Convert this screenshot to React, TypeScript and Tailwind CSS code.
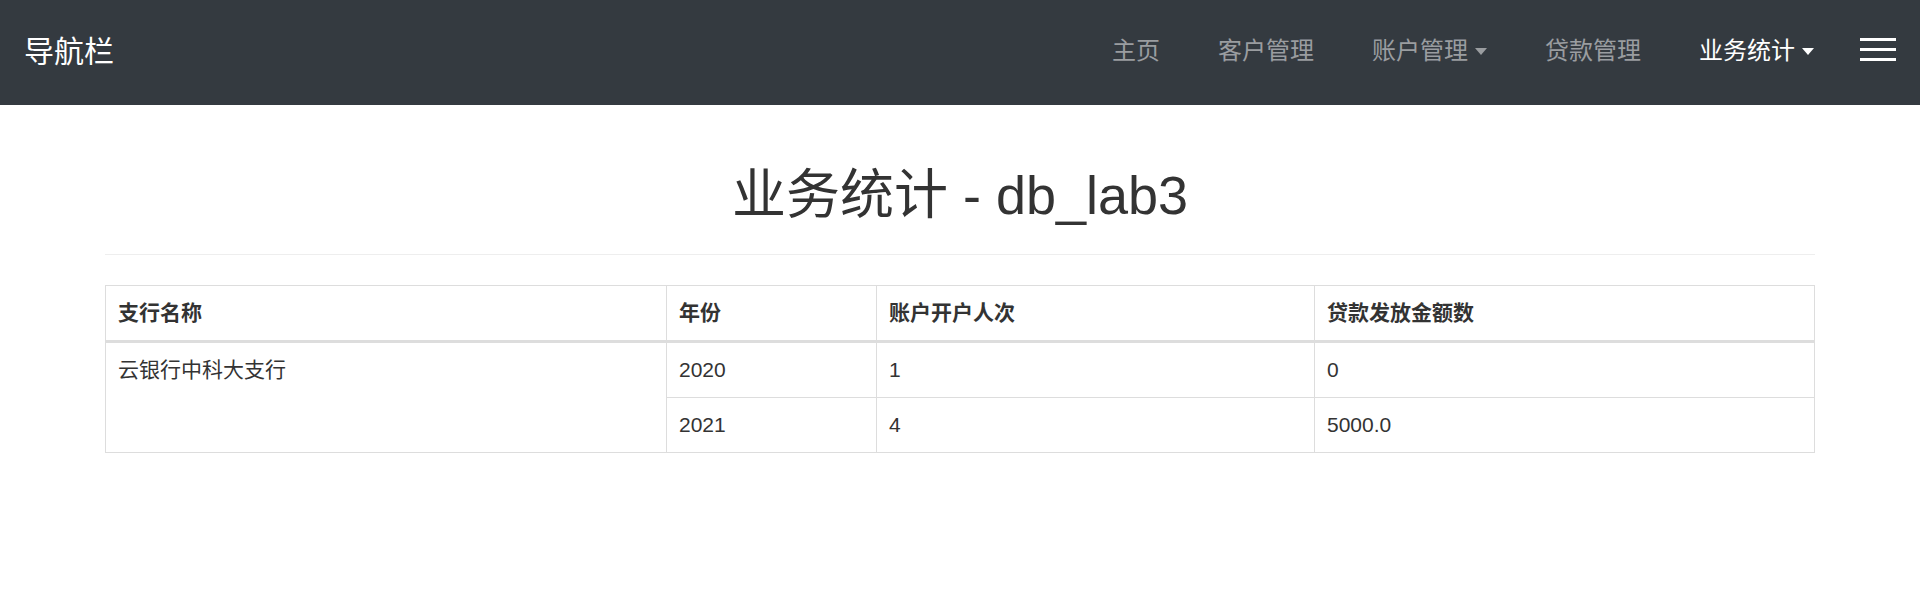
const navItems = [
  { label: "主页", caret: false, active: false },
  { label: "客户管理", caret: false, active: false },
  { label: "账户管理", caret: true, active: false },
  { label: "贷款管理", caret: false, active: false },
  { label: "业务统计", caret: true, active: true },
];

const rows = [
  { year: "2020", opens: "1", amount: "0" },
  { year: "2021", opens: "4", amount: "5000.0" },
];

const font = "font-['Liberation_Sans','Noto_Sans_CJK_SC',sans-serif]";

const App = () => {
  return (
    <div className={`min-h-[594px] bg-white text-[#333] ${font}`}>
      <nav className="h-[105px] bg-[#343a40] flex items-center justify-between pl-[24px] pr-[24px]">
        <span className="text-[30px] leading-none text-white pb-[2px]">导航栏</span>
        <div className="flex items-center">
          <ul className="flex items-center gap-[58px] pb-[3px]">
            {navItems.map((item) => (
              <li
                key={item.label}
                className={`flex items-center text-[24px] leading-none ${
                  item.active ? "text-white" : "text-[#9a9da0]"
                }`}
              >
                {item.label}
                {item.caret && (
                  <span className="ml-[7px] inline-block w-0 h-0 border-x-[6px] border-x-transparent border-t-[7px] border-t-current"></span>
                )}
              </li>
            ))}
          </ul>
          <button className="ml-[46px] mb-[6px] flex flex-col gap-[6.7px] w-[36px]">
            <span className="block h-[3px] w-full bg-white"></span>
            <span className="block h-[3px] w-full bg-white"></span>
            <span className="block h-[3px] w-full bg-white"></span>
          </button>
        </div>
      </nav>

      <div className="mx-[105px] pt-[61px]">
        <div className="border-b border-[#eee] pb-[14px]">
          <h1 className="text-[54px] leading-[59px] h-[59px] mb-[15px] text-center font-normal">
            业务统计 - db_lab3
          </h1>
        </div>

        <table className="mt-[30px] w-full table-fixed border-collapse border border-[#d8d8d8] text-[21px] leading-[30px]">
          <colgroup>
            <col className="w-[561px]" />
            <col className="w-[210px]" />
            <col className="w-[438px]" />
            <col />
          </colgroup>
          <thead>
            <tr>
              <th className="border border-[#ddd] border-b-[3px] px-[12px] py-[12px] text-left font-bold">支行名称</th>
              <th className="border border-[#ddd] border-b-[3px] px-[12px] py-[12px] text-left font-bold">年份</th>
              <th className="border border-[#ddd] border-b-[3px] px-[12px] py-[12px] text-left font-bold">账户开户人次</th>
              <th className="border border-[#ddd] border-b-[3px] px-[12px] py-[12px] text-left font-bold">贷款发放金额数</th>
            </tr>
          </thead>
          <tbody>
            {rows.map((r, i) => (
              <tr key={r.year}>
                {i === 0 && (
                  <td rowSpan={rows.length} className="border border-[#ddd] px-[12px] py-[12px] align-top">
                    云银行中科大支行
                  </td>
                )}
                <td className="border border-[#ddd] px-[12px] py-[12px]">{r.year}</td>
                <td className="border border-[#ddd] px-[12px] py-[12px]">{r.opens}</td>
                <td className="border border-[#ddd] px-[12px] py-[12px]">{r.amount}</td>
              </tr>
            ))}
          </tbody>
        </table>
      </div>
    </div>
  );
};

export default App;
